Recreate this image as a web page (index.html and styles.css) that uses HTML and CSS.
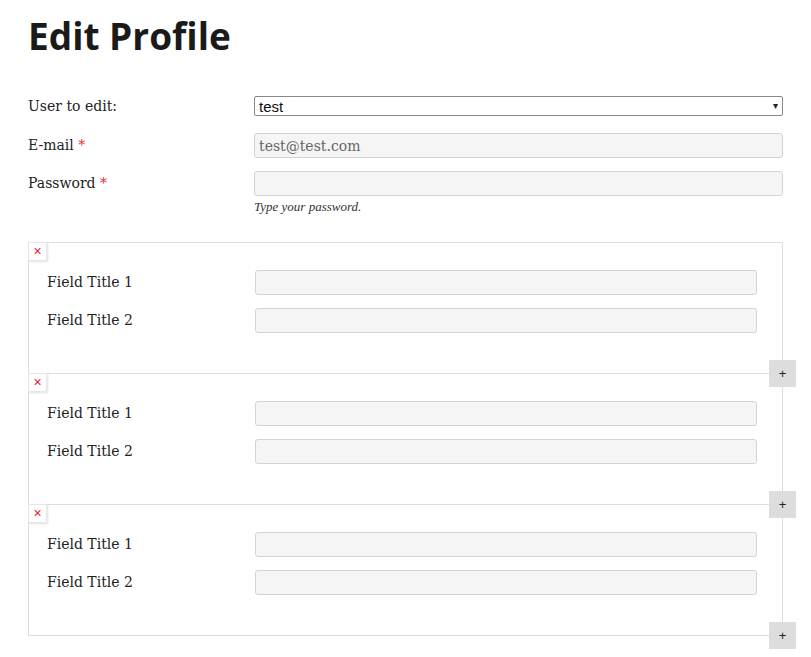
FILE: index.html
```html
<!DOCTYPE html>
<html>
<head>
    <title>Edit Profile</title>
    <link rel="stylesheet" href="styles.css">
</head>
<body>
    <div class="container">
        <h1>Edit Profile</h1>
        <form class="profile-form">
            <div class="form-row">
                <label for="user">User to edit:</label>
                <div class="select-wrap">
                    <select id="user"><option>test</option></select>
                    <span class="arrow">&#9662;</span>
                </div>
            </div>
            <div class="form-row">
                <label for="email">E-mail <span class="req">*</span></label>
                <input type="text" id="email" value="test@test.com">
            </div>
            <div class="form-row">
                <label for="password">Password <span class="req">*</span></label>
                <div>
                    <input type="password" id="password">
                    <p class="hint">Type your password.</p>
                </div>
            </div>

            <div class="repeater">
                <div class="group">
                    <button type="button" class="remove">&times;</button>
                    <div class="form-row">
                        <label>Field Title 1</label>
                        <input type="text">
                    </div>
                    <div class="form-row">
                        <label>Field Title 2</label>
                        <input type="text">
                    </div>
                    <button type="button" class="add">+</button>
                </div>
                <div class="group">
                    <button type="button" class="remove">&times;</button>
                    <div class="form-row">
                        <label>Field Title 1</label>
                        <input type="text">
                    </div>
                    <div class="form-row">
                        <label>Field Title 2</label>
                        <input type="text">
                    </div>
                    <button type="button" class="add">+</button>
                </div>
                <div class="group">
                    <button type="button" class="remove">&times;</button>
                    <div class="form-row">
                        <label>Field Title 1</label>
                        <input type="text">
                    </div>
                    <div class="form-row">
                        <label>Field Title 2</label>
                        <input type="text">
                    </div>
                    <button type="button" class="add">+</button>
                </div>
            </div>
        </form>
    </div>
</body>
</html>
```

FILE: styles.css
```css
body {
    font-family: "DejaVu Serif", serif;
    font-size: 14px;
    color: #222;
    background-color: #fff;
    margin: 0;
    padding: 0;
}
.container {
    width: 755px;
    padding: 14px 0 40px 28px;
}
h1 {
    font-family: "Open Sans", sans-serif;
    font-weight: 700;
    font-size: 37px;
    line-height: 44px;
    color: #1a1a1a;
    margin: 0 0 38px 0;
}
.form-row {
    display: grid;
    grid-template-columns: 226px 1fr;
    align-items: start;
    margin-bottom: 13px;
}
.form-row label {
    line-height: 20px;
    padding-top: 2px;
}
.form-row:first-child label {
    padding-top: 0;
}
.req {
    color: #d33;
}
.select-wrap {
    position: relative;
    margin-bottom: 4px;
}
select {
    width: 100%;
    height: 20px;
    appearance: none;
    font-family: "Liberation Sans", Arial, sans-serif;
    font-size: 15px;
    color: #111;
    background-color: #fff;
    border: 1px solid #888;
    border-radius: 2px;
    padding: 0 4px;
    margin: 0;
}
.select-wrap .arrow {
    position: absolute;
    right: 5px;
    top: 1px;
    font-size: 10px;
    line-height: 18px;
    color: #222;
    pointer-events: none;
}
input {
    display: block;
    width: 100%;
    height: 25px;
    box-sizing: border-box;
    background-color: #f5f5f5;
    border: 1px solid #d4d4d4;
    border-radius: 3px;
    padding: 0 4px;
    font-family: "DejaVu Serif", serif;
    font-size: 14px;
    color: #666;
    margin: 0;
}
.hint {
    font-family: "Liberation Serif", serif;
    font-size: 13px;
    line-height: 15px;
    font-style: italic;
    color: #333;
    margin: 3px 0 0 0;
}
.repeater {
    margin-top: 28px;
}
.group {
    position: relative;
    border: 1px solid #ddd;
    padding: 27px 25px 27px 18px;
    margin-bottom: -1px;
}
.group .form-row {
    grid-template-columns: 208px 1fr;
    align-items: center;
}
.group .form-row label {
    line-height: 25px;
    padding-top: 0;
}
.remove {
    position: absolute;
    left: -1px;
    top: -1px;
    width: 19px;
    height: 19px;
    padding: 0;
    border: 1px solid #e6e6e6;
    background-color: #fff;
    box-shadow: 1px 1px 2px rgba(0, 0, 0, 0.12);
    color: #e8202e;
    font-family: "Liberation Sans", Arial, sans-serif;
    font-size: 14px;
    line-height: 15px;
    cursor: pointer;
}
.add {
    position: absolute;
    right: -14px;
    bottom: -14px;
    width: 27px;
    height: 27px;
    padding: 0;
    border: none;
    background-color: #ddd;
    color: #222;
    font-family: "Liberation Sans", Arial, sans-serif;
    font-size: 13px;
    cursor: pointer;
    z-index: 1;
}
```
